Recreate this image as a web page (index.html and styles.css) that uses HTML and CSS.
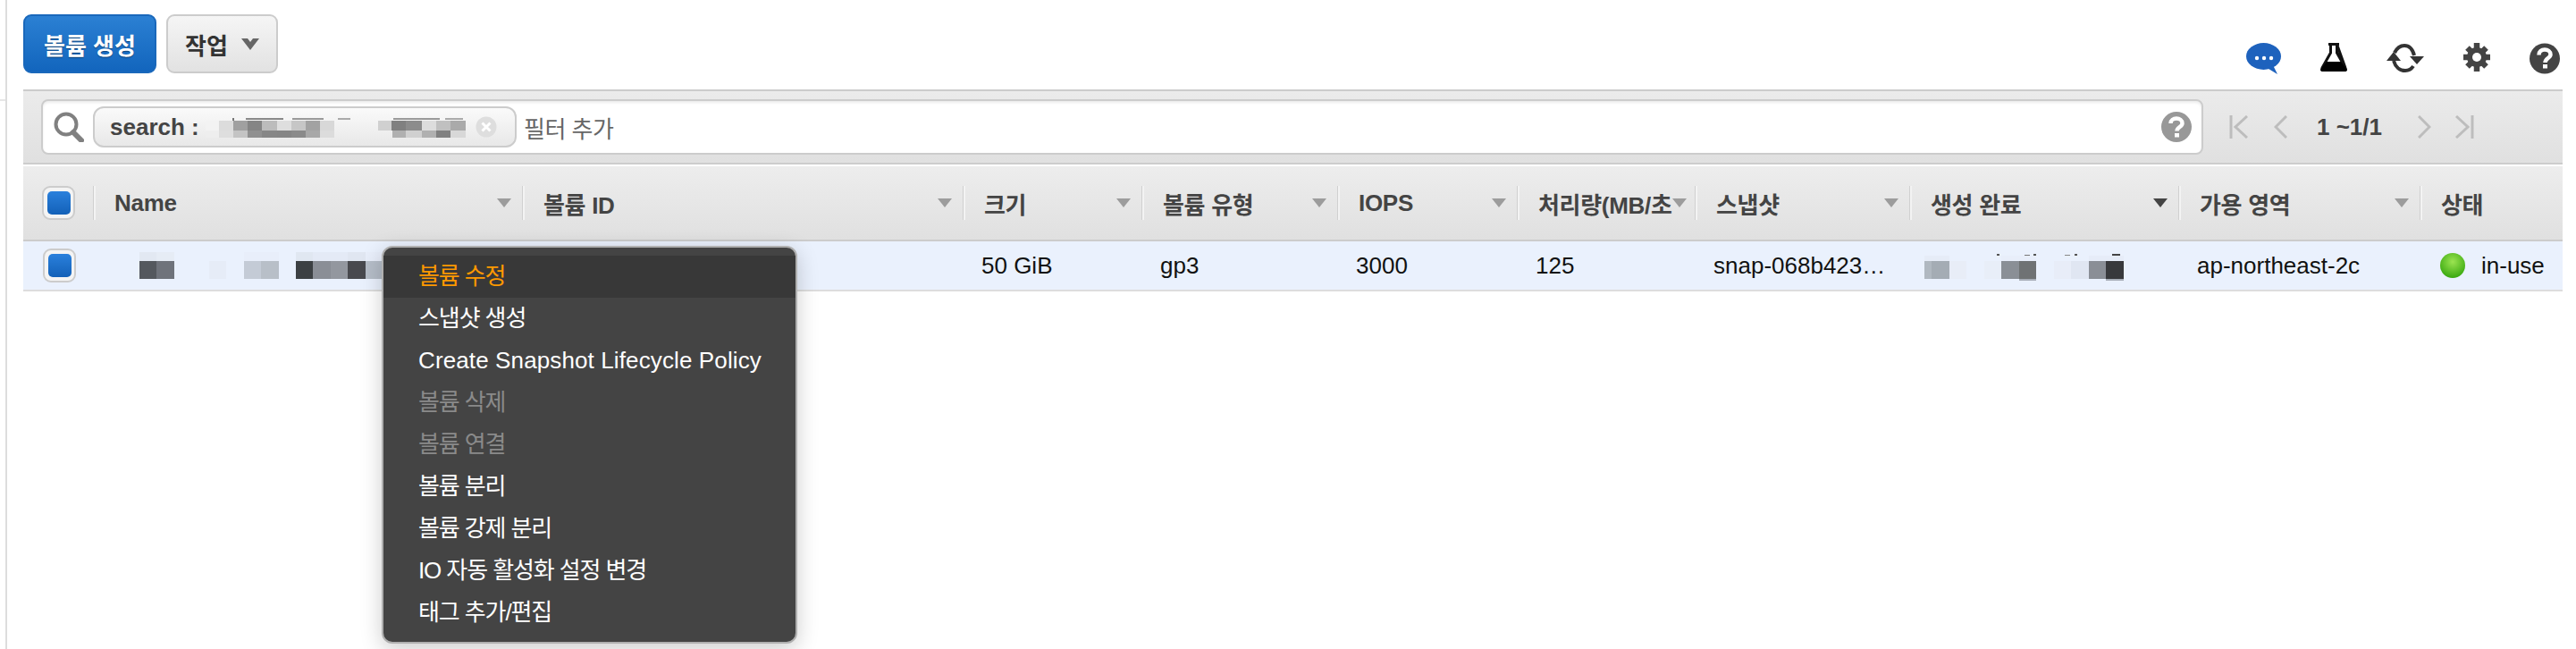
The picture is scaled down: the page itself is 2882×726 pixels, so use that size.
FILE: index.html
```html
<!DOCTYPE html>
<html lang="ko">
<head>
    <meta charset="UTF-8">
    <title>볼륨 | EC2 Management Console</title>
    <link rel="stylesheet" href="styles.css">
</head>
<body>
    <div class="rail-tick"></div>
    <div class="page">
        <div class="toolbar">
            <div class="actions">
                <button class="btn btn-primary">볼륨 생성</button>
                <button class="btn btn-default">작업
                    <svg class="chevron" width="20" height="13" viewBox="0 0 20 13"><path d="M0 0 L7 0 L10 4 L13 0 L20 0 L10 13 Z" fill="#666"/></svg>
                </button>
            </div>
            <div class="tools">
                <svg width="39" height="35" viewBox="0 0 39 35"><ellipse cx="19.500" cy="15" rx="19.500" ry="15" fill="#1e62bd"/><path d="M30 25 L35 35 L25 29 Z" fill="#1e62bd"/><circle cx="12" cy="17" r="2.200" fill="#fff"/><circle cx="20" cy="17" r="2.200" fill="#fff"/><circle cx="28" cy="17" r="2.200" fill="#fff"/></svg>
                <svg width="30" height="32" viewBox="0 0 30 32"><path d="M9 1.500 H21 M11.500 1.500 V11 L2 28 Q1 30.500 4 30.500 H26 Q29 30.500 28 28 L18.500 1.500 M18.500 1.500 V11 L28 28" fill="none" stroke="#111" stroke-width="3"/><path d="M7 21 H23 L30 30 Q30 32 27 32 H3 Q0 32 0 30 Z" fill="#000"/></svg>
                <svg width="42" height="34" viewBox="0 0 42 34"><path d="M9 11 C12 5 16 3 20 3 C25 3 29 6 31 14" fill="none" stroke="#333" stroke-width="4"/><path d="M8 20 C10 27 15 31 21 31 C25 31 28 29 30 26" fill="none" stroke="#333" stroke-width="4"/><path d="M26 15 L42 15 L34 24 Z" fill="#333"/><path d="M0 20 L16 20 L8 10 Z" fill="#333"/></svg>
                <svg width="30" height="32" viewBox="0 0 30 32"><g stroke="#444" stroke-width="6.500"><path d="M15 0 V32"/><path d="M0 16 H30"/><path d="M4.500 5.500 L25.500 26.500"/><path d="M25.500 5.500 L4.500 26.500"/></g><circle cx="15" cy="16" r="11" fill="#444"/><circle cx="15" cy="16" r="5" fill="#fff"/></svg>
                <svg width="34" height="35" viewBox="0 0 34 35"><circle cx="17" cy="17.500" r="17" fill="#444"/><path d="M10.500 13.500 C10.500 9.500 13.500 7.500 17 7.500 C20.500 7.500 23.500 9.500 23.500 13 C23.500 17 17.500 17 17.500 22" fill="none" stroke="#fff" stroke-width="4.500"/><rect x="15" y="24" width="5" height="4.500" fill="#fff"/></svg>
            </div>
        </div>

        <div class="filter-bar">
            <div class="filter-input">
                <svg class="search-icon" width="34" height="34" viewBox="0 0 34 34"><circle cx="14" cy="14" r="11.500" fill="none" stroke="#808080" stroke-width="4"/><path d="M22 23 L31 32" stroke="#808080" stroke-width="6" stroke-linecap="round"/></svg>
                <div class="token">
                    <span class="token-label">search :</span>
                    <svg class="mosaic token-mosaic" width="292" height="20" viewBox="228 131 292 20" shape-rendering="crispEdges">
                        <rect x="258" y="131" width="2" height="3" fill="#777"/><rect x="273" y="131" width="42" height="2" fill="#888"/><rect x="325" y="131" width="35" height="2" fill="#999"/><rect x="376" y="131" width="14" height="2" fill="#aaa"/><rect x="438" y="131" width="52" height="2" fill="#999"/><rect x="496" y="131" width="20" height="2" fill="#aaa"/>
                        <rect x="228" y="134" width="15" height="11" fill="#f3f3f3"/><rect x="243" y="134" width="16" height="11" fill="#dcdcdc"/><rect x="259" y="134" width="16" height="11" fill="#a0a0a0"/><rect x="275" y="134" width="16" height="11" fill="#858585"/><rect x="291" y="134" width="17" height="11" fill="#bcbcbc"/><rect x="308" y="134" width="16" height="11" fill="#dedede"/><rect x="324" y="134" width="16" height="11" fill="#c6c6c6"/><rect x="340" y="134" width="16" height="11" fill="#a2a2a2"/><rect x="356" y="134" width="16" height="11" fill="#d8d8d8"/>
                        <rect x="421" y="134" width="15" height="11" fill="#d0d0d0"/><rect x="436" y="134" width="16" height="11" fill="#808080"/><rect x="452" y="134" width="18" height="11" fill="#8c8c8c"/><rect x="470" y="134" width="16" height="11" fill="#dddddd"/><rect x="486" y="134" width="16" height="11" fill="#c0c0c0"/><rect x="502" y="134" width="17" height="11" fill="#aaaaaa"/>
                        <rect x="228" y="145" width="15" height="8" fill="#eeeeee"/><rect x="243" y="145" width="16" height="8" fill="#dedede"/><rect x="259" y="145" width="16" height="8" fill="#c4c4c4"/><rect x="275" y="145" width="16" height="8" fill="#909090"/><rect x="291" y="145" width="17" height="8" fill="#868686"/><rect x="308" y="145" width="16" height="8" fill="#858585"/><rect x="324" y="145" width="16" height="8" fill="#8a8a8a"/><rect x="340" y="145" width="16" height="8" fill="#a8a8a8"/><rect x="356" y="145" width="16" height="8" fill="#dcdcdc"/>
                        <rect x="437" y="145" width="15" height="8" fill="#b0b0b0"/><rect x="452" y="145" width="18" height="8" fill="#d0d0d0"/><rect x="470" y="145" width="16" height="8" fill="#b0b0b0"/><rect x="486" y="145" width="16" height="8" fill="#808080"/><rect x="502" y="145" width="17" height="8" fill="#d8d8d8"/>
                    </svg>
                    <svg class="token-close" width="24" height="24" viewBox="0 0 24 24"><circle cx="12" cy="12" r="11.500" fill="#dedede"/><path d="M7.500 7.500 L16.500 16.500 M16.500 7.500 L7.500 16.500" stroke="#fff" stroke-width="3"/></svg>
                </div>
                <span class="filter-placeholder">필터 추가</span>
                <svg class="filter-help" width="34" height="34" viewBox="0 0 34 34"><circle cx="17" cy="17" r="17" fill="#989898"/><path d="M10.500 13 C10.500 9.500 13.500 7.500 17 7.500 C20.500 7.500 23.500 9.500 23.500 13 C23.500 17 17.500 17 17.500 21.500" fill="none" stroke="#fff" stroke-width="4.500"/><rect x="15" y="24" width="5" height="4.500" fill="#fff"/></svg>
            </div>
            <div class="pager">
                <svg width="21" height="26" viewBox="0 0 21 26"><path d="M2 0 V26 M20 1 L7 13 L20 25" fill="none" stroke="#bdbdbd" stroke-width="3"/></svg>
                <svg class="pager-prev" width="15" height="26" viewBox="0 0 15 26"><path d="M14 1 L2 13 L14 25" fill="none" stroke="#bdbdbd" stroke-width="3"/></svg>
                <span class="pager-text">1 ~1/1</span>
                <svg class="pager-next" width="15" height="26" viewBox="0 0 15 26"><path d="M1 1 L13 13 L1 25" fill="none" stroke="#bdbdbd" stroke-width="3"/></svg>
                <svg class="pager-last" width="21" height="26" viewBox="0 0 21 26"><path d="M19 0 V26 M1 1 L14 13 L1 25" fill="none" stroke="#bdbdbd" stroke-width="3"/></svg>
            </div>
        </div>

        <div class="cols head-row">
            <div class="head-check"><span class="check"><span class="check-fill"></span></span></div>
            <div class="head-cell">Name<i class="sort"></i></div>
            <div class="head-cell">볼륨 ID<i class="sort"></i></div>
            <div class="head-cell">크기<i class="sort"></i></div>
            <div class="head-cell">볼륨 유형<i class="sort"></i></div>
            <div class="head-cell">IOPS<i class="sort"></i></div>
            <div class="head-cell">처리량(MB/초<i class="sort"></i></div>
            <div class="head-cell">스냅샷<i class="sort"></i></div>
            <div class="head-cell">생성 완료<i class="sort sort-active"></i></div>
            <div class="head-cell">가용 영역<i class="sort"></i></div>
            <div class="head-cell">상태</div>
        </div>

        <div class="cols data-row">
            <div class="data-check"><span class="check"><span class="check-fill"></span></span></div>
            <div class="data-cell name-cell">
                <svg class="mosaic" width="271" height="30" viewBox="156 282 271 30" shape-rendering="crispEdges">
                    <rect x="156" y="282" width="19" height="10" fill="#e2e8f2"/><rect x="175" y="282" width="20" height="10" fill="#e6ecf5"/><rect x="273" y="282" width="39" height="10" fill="#e8eefa"/><rect x="331" y="282" width="19" height="10" fill="#e0e7f1"/><rect x="350" y="282" width="39" height="10" fill="#e4eaf6"/><rect x="389" y="282" width="20" height="10" fill="#e0e6f1"/><rect x="409" y="282" width="18" height="10" fill="#e8eefa"/>
                    <rect x="156" y="292" width="19" height="20" fill="#54585e"/><rect x="175" y="292" width="20" height="20" fill="#6f737b"/><rect x="234" y="292" width="19" height="20" fill="#e6ecf7"/><rect x="273" y="292" width="19" height="20" fill="#c4cbd6"/><rect x="292" y="292" width="20" height="20" fill="#b8bfc8"/><rect x="331" y="292" width="19" height="20" fill="#3c4043"/><rect x="350" y="292" width="20" height="20" fill="#8a8e96"/><rect x="370" y="292" width="19" height="20" fill="#93979f"/><rect x="389" y="292" width="20" height="20" fill="#48494e"/><rect x="409" y="292" width="18" height="20" fill="#b5bdc8"/>
                </svg>
            </div>
            <div class="data-cell"></div>
            <div class="data-cell">50 GiB</div>
            <div class="data-cell">gp3</div>
            <div class="data-cell">3000</div>
            <div class="data-cell">125</div>
            <div class="data-cell">snap-068b423…</div>
            <div class="data-cell date-cell">
                <svg class="mosaic" width="223" height="30" viewBox="2153 282 223 30" shape-rendering="crispEdges">
                    <rect x="2234" y="284" width="3" height="2" fill="#555"/><rect x="2265" y="285" width="6" height="1" fill="#777"/><rect x="2275" y="284" width="3" height="2" fill="#555"/><rect x="2310" y="285" width="6" height="1" fill="#888"/><rect x="2321" y="284" width="3" height="2" fill="#555"/><rect x="2363" y="284" width="9" height="2" fill="#444"/>
                    <rect x="2153" y="286" width="28" height="6" fill="#e6ecf7"/><rect x="2239" y="286" width="39" height="6" fill="#e8eefa"/><rect x="2337" y="286" width="39" height="6" fill="#e6ecf8"/>
                    <rect x="2153" y="292" width="8" height="20" fill="#b0b8c0"/><rect x="2161" y="292" width="20" height="20" fill="#a4acb4"/><rect x="2181" y="292" width="19" height="20" fill="#e8edf7"/><rect x="2220" y="292" width="19" height="20" fill="#e8eef8"/><rect x="2239" y="292" width="20" height="20" fill="#8a8f96"/><rect x="2259" y="292" width="19" height="20" fill="#6f7274"/><rect x="2298" y="292" width="19" height="20" fill="#e8edf8"/><rect x="2317" y="292" width="20" height="20" fill="#e0e6f2"/><rect x="2337" y="292" width="19" height="20" fill="#8a8e96"/><rect x="2356" y="292" width="20" height="20" fill="#38393c"/>
                    <rect x="2259" y="312" width="19" height="2" fill="#a8aeb8"/><rect x="2356" y="312" width="20" height="2" fill="#a8aeb8"/>
                </svg>
            </div>
            <div class="data-cell">ap-northeast-2c</div>
            <div class="data-cell state-cell"><span class="state-dot"></span>in-use</div>

            <ul class="context-menu">
                <li class="menu-item menu-active">볼륨 수정</li>
                <li class="menu-item">스냅샷 생성</li>
                <li class="menu-item menu-latin">Create Snapshot Lifecycle Policy</li>
                <li class="menu-item menu-disabled">볼륨 삭제</li>
                <li class="menu-item menu-disabled">볼륨 연결</li>
                <li class="menu-item">볼륨 분리</li>
                <li class="menu-item">볼륨 강제 분리</li>
                <li class="menu-item">IO 자동 활성화 설정 변경</li>
                <li class="menu-item">태그 추가/편집</li>
            </ul>
        </div>
    </div>
</body>
</html>
```

FILE: styles.css
```css
html, body {
    margin: 0;
    padding: 0;
    height: 726px;
    overflow: hidden;
}
body {
    font-family: "Liberation Sans", "Noto Sans CJK KR", sans-serif;
    font-size: 26px;
    background: #ffffff;
    color: #222222;
    position: relative;
}
.rail-tick {
    position: absolute;
    left: 0;
    top: 111px;
    width: 6px;
    height: 2px;
    background: #e6e6e6;
}
.page {
    margin-left: 6px;
    width: 2861px;
    height: 726px;
    padding-left: 18px;
    border-left: 2px solid #dddddd;
    box-sizing: border-box;
}
.mosaic {
    overflow: visible;
    flex: none;
}

/* top buttons and tool icons */
.toolbar {
    height: 100px;
    padding-top: 16px;
    box-sizing: border-box;
    display: flex;
    justify-content: space-between;
}
.actions {
    display: flex;
    gap: 11px;
}
.btn {
    font-family: inherit;
    font-size: 26px;
    font-weight: 700;
    height: 66px;
    border-radius: 9px;
    padding: 0;
    display: flex;
    align-items: center;
    justify-content: center;
    box-sizing: border-box;
}
.btn-primary {
    width: 149px;
    color: #ffffff;
    background: linear-gradient(#2b80d3, #1265bd);
    border: 2px solid #1a68bb;
    text-shadow: 0 1px 1px rgba(0, 0, 0, 0.4);
}
.btn-default {
    width: 125px;
    color: #333333;
    background: linear-gradient(#f5f5f5, #e2e2e2);
    border: 2px solid #cccccc;
    gap: 15px;
}
.tools {
    display: flex;
    align-items: flex-start;
    gap: 44px;
    padding: 32px 3px 0 0;
}
.tools svg {
    filter: blur(0.5px);
}

/* filter bar */
.filter-bar {
    height: 84px;
    box-sizing: border-box;
    border-top: 2px solid #cccccc;
    border-bottom: 2px solid #cccccc;
    background: linear-gradient(#ebebeb, #e0e0e0);
    display: flex;
    align-items: center;
    padding-left: 20px;
}
.filter-input {
    width: 2419px;
    height: 62px;
    box-sizing: border-box;
    background: #ffffff;
    border: 2px solid #cccccc;
    border-radius: 8px;
    display: flex;
    align-items: center;
    padding: 0 11px 0 12px;
    box-shadow: inset 0 2px 3px rgba(0, 0, 0, 0.08);
}
.search-icon {
    flex: none;
    margin-right: 10px;
    filter: blur(0.5px);
}
.token {
    width: 474px;
    height: 46px;
    box-sizing: border-box;
    border: 2px solid #cccccc;
    border-radius: 12px;
    background: linear-gradient(#fafafa, #e8e8e8);
    display: flex;
    align-items: center;
    padding-left: 17px;
}
.token-label {
    font-weight: 700;
    color: #444444;
}
.token-mosaic {
    margin-left: 7px;
}
.token-close {
    margin-left: auto;
    margin-right: 20px;
    flex: none;
}
.filter-placeholder {
    margin-left: 8px;
    color: #666666;
    letter-spacing: -0.5px;
}
.filter-help {
    margin-left: auto;
    flex: none;
    filter: blur(0.5px);
}
.pager {
    display: flex;
    align-items: center;
    margin-left: 29px;
}
.pager-prev {
    margin-left: 29px;
}
.pager-text {
    font-weight: 700;
    color: #444444;
    margin-left: 33px;
    width: 113px;
}
.pager-last {
    margin-left: 27px;
}

/* table */
.cols {
    display: grid;
    grid-template-columns: 79px 480px 493px 200px 219px 201px 199px 240px 301px 270px 159px;
}
.head-row {
    margin-top: 2px;
    height: 84px;
    box-sizing: border-box;
    border-bottom: 2px solid #cccccc;
    background: linear-gradient(#ededed, #e0e0e0);
    align-items: center;
    font-weight: 700;
    color: #444444;
}
.head-check, .data-check {
    padding-left: 21px;
    display: flex;
}
.head-cell {
    height: 38px;
    box-sizing: border-box;
    border-left: 2px solid #f3f3f3;
    box-shadow: -1px 0 0 #d0d0d0;
    padding-left: 21px;
    display: flex;
    align-items: center;
    white-space: nowrap;
    overflow: hidden;
    letter-spacing: -0.3px;
}
.sort {
    margin-left: auto;
    margin-right: 13px;
    flex: none;
    width: 0;
    height: 0;
    border-left: 8px solid transparent;
    border-right: 8px solid transparent;
    border-top: 10px solid #9c9c9c;
}
.sort-active {
    border-top-color: #444444;
}
.check {
    width: 37px;
    height: 38px;
    box-sizing: border-box;
    border: 2px solid #cccccc;
    border-radius: 9px;
    background: #f4f4f4;
    display: flex;
    align-items: center;
    justify-content: center;
}
.check-fill {
    width: 26px;
    height: 26px;
    border-radius: 5px;
    background: linear-gradient(#2a80dc, #1361b8);
}
.data-row {
    height: 56px;
    box-sizing: border-box;
    border-bottom: 2px solid #dddddd;
    background: #eaf1fd;
    align-items: center;
    color: #111111;
    position: relative;
}
.data-check {
    padding-left: 22px;
}
.data-cell {
    padding-left: 20px;
    white-space: nowrap;
}
.name-cell {
    padding-left: 51px;
    display: flex;
}
.date-cell {
    padding-left: 16px;
    display: flex;
}
.state-cell {
    padding-left: 22px;
    display: flex;
    align-items: center;
    gap: 18px;
}
.state-dot {
    width: 28px;
    height: 28px;
    border-radius: 50%;
    background: radial-gradient(circle at 50% 35%, #9be451, #38a80f 80%);
}

/* context menu, opened over the row */
.context-menu {
    position: absolute;
    left: 401px;
    top: 5px;
    width: 465px;
    box-sizing: border-box;
    margin: 0;
    padding: 9px 0 9px;
    list-style: none;
    background: #444444;
    border: 2px solid #b0b0b0;
    border-radius: 12px;
    box-shadow: 0 6px 24px rgba(0, 0, 0, 0.2);
    color: #ffffff;
}
.menu-item {
    height: 47px;
    line-height: 47px;
    padding-left: 39px;
    letter-spacing: -1.1px;
}
.menu-latin {
    letter-spacing: 0.12px;
}
.menu-active {
    background: #383838;
    color: #ff9900;
}
.menu-disabled {
    color: #8a8a8a;
}
```
